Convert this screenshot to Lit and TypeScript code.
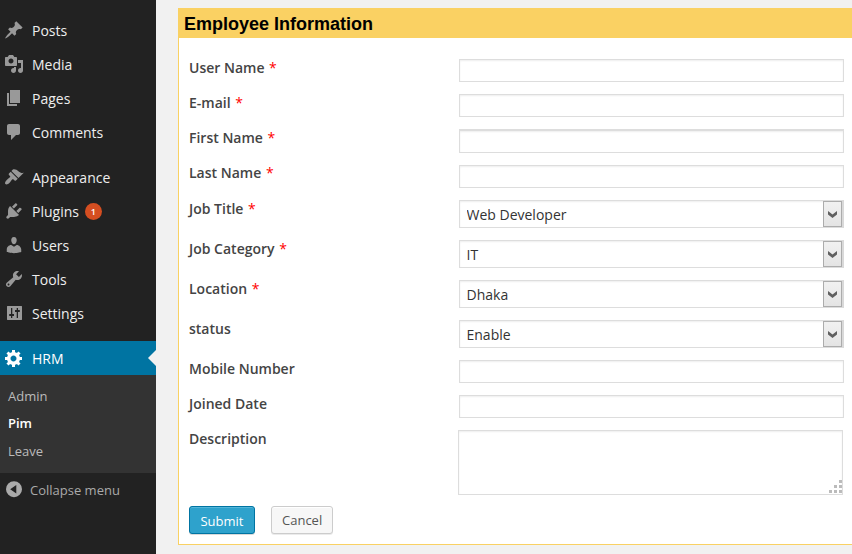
import { LitElement, html, css, svg, nothing } from "lit";
import { customElement, property } from "lit/decorators.js";
import { classMap } from "lit/directives/class-map.js";

const ICONS: Record<string, string> = {
  post: "M10.44 3.02l1.82-1.82 6.36 6.35-1.83 1.82c-1.05-.68-2.48-.57-3.41.36l-.75.75c-.92.93-1.04 2.35-.35 3.41l-1.83 1.82-2.41-2.41-2.8 2.79c-.42.42-3.38 2.71-3.8 2.29s1.86-3.39 2.28-3.81l2.79-2.79L4.1 9.36l1.83-1.82c1.05.69 2.48.57 3.4-.36l.75-.75c.93-.92 1.05-2.35.36-3.41z",
  media: "M13 11V4c0-.55-.45-1-1-1h-1.67L9 1H5L3.67 3H2c-.55 0-1 .45-1 1v7c0 .55.45 1 1 1h10c.55 0 1-.45 1-1zM7 4.5c1.38 0 2.5 1.12 2.5 2.5S8.38 9.5 7 9.5 4.5 8.38 4.5 7 5.62 4.5 7 4.5zM14 6h5v10.5c0 1.38-1.12 2.5-2.5 2.5S14 17.88 14 16.5s1.12-2.5 2.5-2.5c.17 0 .34.02.5.05V9h-3V6zm-4 8.05V13h2v3.5c0 1.38-1.12 2.5-2.5 2.5S7 17.88 7 16.5 8.12 14 9.5 14c.17 0 .34.02.5.05z",
  page: "M6 15V2h10v13H6zm-1 1h8v2H3V5h2v11z",
  comments: "M5 2h9c1.1 0 2 .9 2 2v7c0 1.1-.9 2-2 2h-2l-5 5v-5H5c-1.1 0-2-.9-2-2V4c0-1.1.9-2 2-2z",
  appearance: "M14.48 11.06L7.41 3.99l1.5-1.5c.5-.56 2.3-.47 3.51.32 1.21.8 1.43 1.28 2.91 2.1 1.18.64 2.45 1.26 4.45.85zm-.71.71L6.7 4.7 4.93 6.47c-.39.39-.39 1.02 0 1.41l1.06 1.06c.39.39.39 1.03 0 1.42-.6.6-1.43 1.11-2.21 1.69-.35.26-.7.53-1.01.84C1.43 14.23.4 16.08 1.4 17.07c.99 1 2.84-.03 4.18-1.36.31-.31.58-.66.85-1.02.57-.78 1.08-1.61 1.69-2.21.39-.39 1.02-.39 1.41 0l1.06 1.06c.39.39 1.02.39 1.41 0z",
  plugins: "M13.11 4.36L9.87 7.6 8 5.73l3.24-3.24c.35-.34 1.05-.2 1.56.32.52.51.66 1.21.31 1.55zm-8 1.77l.91-1.12 9.01 9.01-1.19.84c-.71.71-2.63 1.16-3.82 1.16H6.14L4.9 17.26c-.59.59-1.54.59-2.12 0-.59-.58-.59-1.53 0-2.12l1.24-1.24v-3.88c0-1.13.4-3.19 1.09-3.89zm7.26 3.97l3.24-3.24c.34-.35 1.04-.21 1.55.31.52.51.66 1.21.31 1.55l-3.24 3.25z",
  users: "M10 9.25c-2.27 0-2.73-3.44-2.73-3.44C7 4.02 7.82 2 9.97 2c2.16 0 2.98 2.02 2.71 3.81 0 0-.41 3.44-2.68 3.44zm0 2.57L12.72 10c2.39 0 4.52 2.33 4.52 4.53v2.49s-3.65 1.13-7.24 1.13c-3.65 0-7.24-1.13-7.24-1.13v-2.49c0-2.25 1.94-4.48 4.47-4.48z",
  tools: "M16.68 9.77c-1.34 1.34-3.3 1.67-4.95.99l-5.41 6.52c-.99.99-2.59.99-3.58 0s-.99-2.59 0-3.57l6.52-5.42c-.68-1.65-.35-3.61.99-4.95 1.28-1.28 3.12-1.62 4.72-1.06l-2.89 2.89 2.82 2.82 2.86-2.87c.53 1.58.18 3.39-1.08 4.65zM3.81 16.21c.4.39 1.04.39 1.43 0 .4-.4.4-1.04 0-1.43-.39-.4-1.03-.4-1.43 0-.39.39-.39 1.03 0 1.43z",
  settings: "M3.500 3h14c.3 0 .5.2.5.5v13c0 .3-.2.5-.5.5h-14c-.3 0-.5-.2-.5-.5v-13c0-.3.2-.5.5-.5zM7 5v6H5.200v2H7v2h1.300v-2H10v-2H8.300V5zm5.700 0v2H11v2h1.700v6H14V9h1.800V7H14V5z",
  generic: "M18 12h-2.18c-.17.7-.44 1.35-.81 1.93l1.54 1.54-2.1 2.1-1.54-1.54c-.58.36-1.23.63-1.91.79V19H8v-2.18c-.68-.16-1.33-.43-1.91-.79l-1.54 1.54-2.12-2.12 1.54-1.54c-.36-.58-.63-1.23-.79-1.91H1V9.03h2.17c.16-.7.44-1.35.8-1.94L2.43 5.55l2.1-2.1 1.54 1.54c.58-.37 1.24-.64 1.93-.81V2h3v2.18c.68.16 1.33.43 1.91.79l1.54-1.54 2.12 2.12-1.54 1.54c.36.59.64 1.24.8 1.94H18V12zm-8.5 1.500c1.66 0 3-1.34 3-3s-1.34-3-3-3-3 1.340-3 3 1.340 3 3 3z",
  collapse: "M10 2.200a8 8 0 1 0 0 16 8 8 0 0 0 0-16zM12.300 6v8.400L6.200 10.200z",
};

const icon = (name: string) => html`
  <svg class="icon" viewBox="0 0 20 20" width="20" height="20" aria-hidden="true">
    ${svg`<path fill="currentColor" fill-rule="evenodd" d=${ICONS[name]}></path>`}
  </svg>`;

interface MenuItem { label: string; icon: string; badge?: number; current?: boolean }

const MENU: MenuItem[][] = [
  [
    { label: "Posts", icon: "post" },
    { label: "Media", icon: "media" },
    { label: "Pages", icon: "page" },
    { label: "Comments", icon: "comments" },
  ],
  [
    { label: "Appearance", icon: "appearance" },
    { label: "Plugins", icon: "plugins", badge: 1 },
    { label: "Users", icon: "users" },
    { label: "Tools", icon: "tools" },
    { label: "Settings", icon: "settings" },
  ],
  [{ label: "HRM", icon: "generic", current: true }],
];

@customElement("admin-menu")
class AdminMenu extends LitElement {
  static styles = css`
    :host { display: block; box-sizing: border-box; width: 156px; padding-top: 13px; background: #222; color: #eee; font: 14px/18px "Open Sans", sans-serif; }
    .group { margin-bottom: 11px; }
    .group:last-of-type { margin-bottom: 0; }
    .item { display: flex; align-items: center; height: 34px; box-sizing: border-box; padding-left: 4px; }
    .name { padding-top: 2px; }
    .icon { display: block; flex: none; color: #999; margin-right: 8px; }
    .item.current { position: relative; background: #0074a2; color: #fff; }
    .item.current .icon { color: #fff; }
    .item.current::after { content: ""; position: absolute; right: 0; top: 9px; border: 8px solid transparent; border-left-width: 0; border-right-color: #f1f1f1; }
    .badge { box-sizing: border-box; width: 17px; height: 17px; margin-left: 6px; border-radius: 50%; background: #d54e21; color: #fff; font-size: 9px; line-height: 17px; font-weight: 600; text-align: center; }
    .sub { box-sizing: border-box; height: 98px; padding: 8px 8px 0; background: #333; color: #bbb; font-size: 13px; }
    .link { height: 27px; line-height: 27px; }
    .link:last-child { padding-top: 1px; }
    .link.on { color: #fff; font-weight: 600; }
    .collapse { display: flex; align-items: center; height: 34px; padding-left: 4px; color: #aaa; font-size: 13px; }
    .collapse .icon { color: #aaa; margin-right: 6px; margin-top: -3px; }
  `;
  render() {
    return html`
      ${MENU.map((g) => html`<div class="group">${g.map((m) => html`
        <div class=${classMap({ item: true, current: !!m.current })}>
          ${icon(m.icon)}<span class="name">${m.label}</span>
          ${m.badge ? html`<span class="badge">${m.badge}</span>` : nothing}
        </div>`)}</div>`)}
      <nav class="sub">
        ${["Admin", "Pim", "Leave"].map((s) => html`<div class=${classMap({ link: true, on: s === "Pim" })}>${s}</div>`)}
      </nav>
      <footer class="collapse">${icon("collapse")}<span>Collapse menu</span></footer>`;
  }
}

@customElement("form-row")
class FormRow extends LitElement {
  @property() label = "";
  @property() kind = "text";
  @property() value = "";
  @property({ type: Boolean }) required = false;
  static styles = css`
    :host { display: grid; grid-template-columns: 270px 385px; align-items: start; height: 35px; font: 14px/18px "Open Sans", sans-serif; }
    :host([kind="select"]) { height: 40px; }
    :host([kind="area"]) { height: 76px; }
    .label { font-weight: 600; color: #444; }
    .star { color: #f00; font-weight: 400; margin-left: 1px; }
    .field { box-sizing: border-box; display: block; width: 385px; height: 23px; margin: 0; border: 1px solid #ddd; border-radius: 0; background: #fff; box-shadow: inset 0 1px 2px rgba(0, 0, 0, .07); outline: none; font: inherit; color: #333; }
    :host([heavy]) .field { height: 24px; border-top-width: 2px; }
    :host([low]) .field { margin-top: 1px; }
    .area { width: 385px; height: 65px; resize: none; }
    .areabox, .pick { display: grid; }
    .areabox { margin-left: -1px; }
    .areabox > *, .pick > * { grid-area: 1 / 1; }
    .grip { place-self: end; margin: 0 2px 2px 0; }
    .select { height: 28px; appearance: none; padding: 1px 0 0 6.500px; border-right: 2px solid #d9d9d9; }
    .drop { place-self: start end; box-sizing: border-box; display: grid; place-items: center; width: 19px; height: 26px; margin: 1px 2px 0 0; border: 1px solid #acacac; background: linear-gradient(#f1f1f1, #e4e4e4); pointer-events: none; }
  `;
  private control() {
    if (this.kind === "select")
      return html`<div class="pick">
        <select class="field select"><option>${this.value}</option></select>
        <span class="drop"><svg width="9" height="7" viewBox="0 0 9 7"><path d="M0 0 4.500 3.500 9 0V3.500L4.500 7 0 3.500z" fill="#606060"></path></svg></span>
      </div>`;
    if (this.kind === "area")
      return html`<div class="areabox">
        <textarea class="field area"></textarea>
        <svg class="grip" width="14" height="14" viewBox="0 0 14 14" fill="#bbb">
          ${[[11, 1], [6, 6], [11, 6], [1, 11], [6, 11], [11, 11]].map(([x, y]) => svg`<rect x=${x} y=${y} width="3" height="3"></rect>`)}
        </svg>
      </div>`;
    return html`<input class="field" type="text" />`;
  }
  render() {
    return html`<label class="label">${this.label}${this.required ? html` <span class="star">*</span>` : nothing}</label>${this.control()}`;
  }
}

@customElement("app-root")
class AppRoot extends LitElement {
  static styles = css`
    :host { display: flex; height: 554px; overflow: hidden; background: #f1f1f1; font: 13px/18px "Open Sans", sans-serif; }
    .panel { flex: 1; box-sizing: border-box; height: 537px; margin: 8px 0 0 22px; border: 1px solid #f9d163; border-width: 0 0 1px 1px; background: #fff; }
    .title { box-sizing: border-box; height: 30px; margin: 0 0 21px; padding-left: 5px; background: #fad163; color: #000; font: bold 18px/32px "Liberation Sans", Arial, sans-serif; }
    .form { padding-left: 10px; }
    .low1 { margin-bottom: 1px; }
    .actions { display: flex; gap: 16px; }
    .btn { box-sizing: border-box; height: 28px; padding: 0 10px; border: 1px solid #ccc; border-radius: 3px; background: #f7f7f7; color: #555; font: inherit; line-height: 26px; box-shadow: inset 0 1px 0 #fff, 0 1px 0 rgba(0, 0, 0, .08); }
    .primary { width: 66px; background: #2ea2cc; border-color: #0074a2; color: #fff; line-height: 28px; box-shadow: inset 0 1px 0 rgba(120, 200, 230, .5), 0 1px 0 rgba(0, 0, 0, .15); }
  `;
  render() {
    return html`
      <admin-menu></admin-menu>
      <main class="panel">
        <h2 class="title">Employee Information</h2>
        <div class="form">
          <form-row label="User Name" required></form-row>
          <form-row label="E-mail" required></form-row>
          <form-row label="First Name" required heavy></form-row>
          <form-row class="low1" label="Last Name" required low></form-row>
          <form-row kind="select" label="Job Title" value="Web Developer" required></form-row>
          <form-row kind="select" label="Job Category" value="IT" required></form-row>
          <form-row kind="select" label="Location" value="Dhaka" required></form-row>
          <form-row kind="select" label="status" value="Enable"></form-row>
          <form-row label="Mobile Number"></form-row>
          <form-row label="Joined Date"></form-row>
          <form-row kind="area" label="Description"></form-row>
          <div class="actions">
            <button class="btn primary">Submit</button>
            <button class="btn">Cancel</button>
          </div>
        </div>
      </main>`;
  }
}
